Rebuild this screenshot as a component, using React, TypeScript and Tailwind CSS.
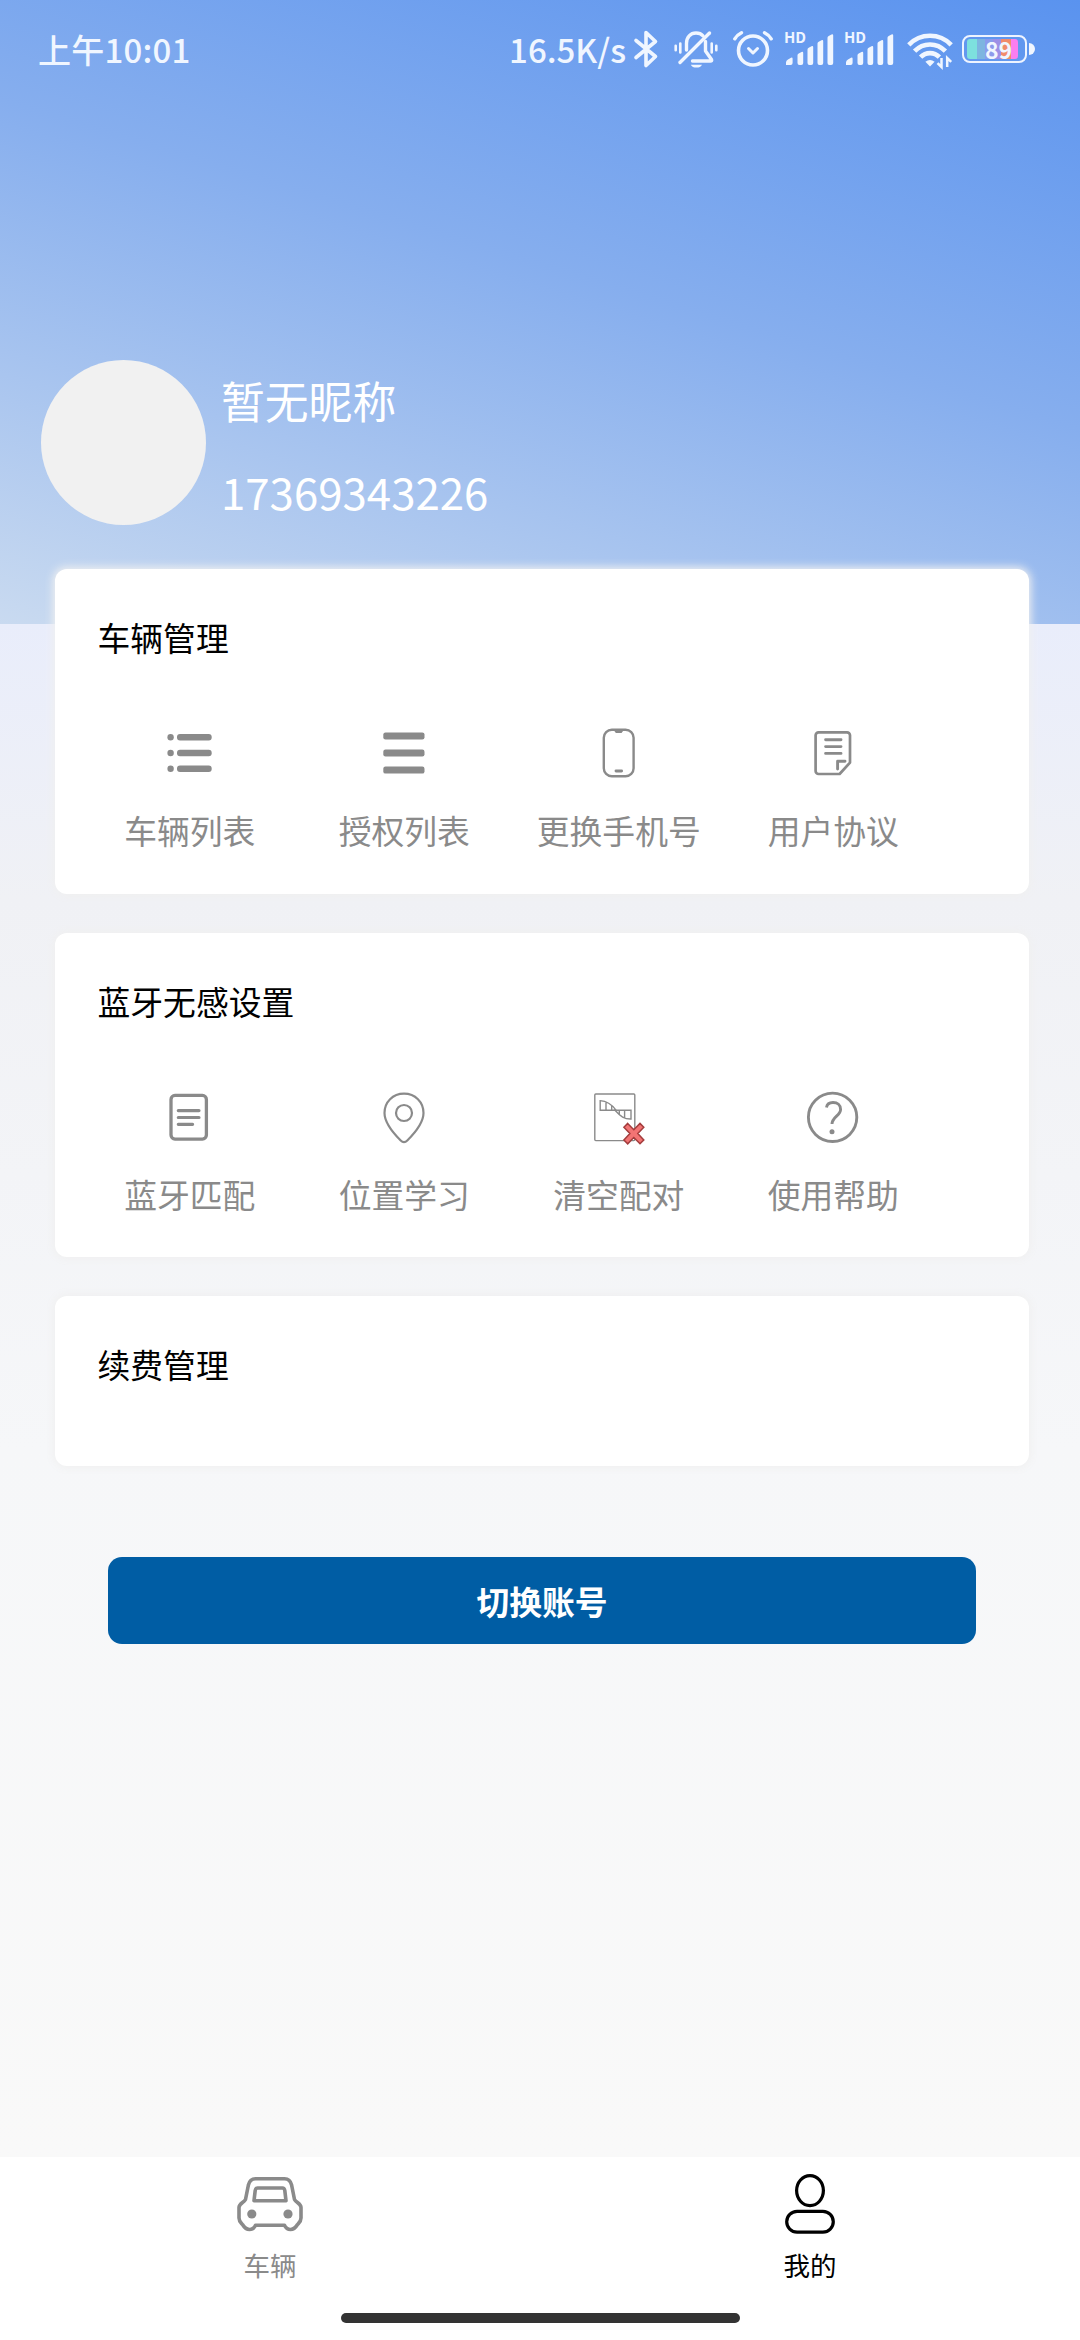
import type { ReactNode } from "react";

const GRAY = "#8a8a8a";

function ListIcon() {
  return (
    <svg className="size-[60px]" viewBox="0 0 60 60" fill={GRAY}>
      {[14.3, 30, 45.7].map((y) => (
        <g key={y}>
          <circle cx="10.6" cy={y} r="3.2" />
          <rect x="17" y={y - 3.2} width="34.7" height="6.4" rx="3" />
        </g>
      ))}
    </svg>
  );
}

function MenuIcon() {
  return (
    <svg className="size-[60px]" viewBox="0 0 60 60" fill={GRAY}>
      {[12.9, 30, 47.1].map((y) => (
        <rect key={y} x="9.3" y={y - 3.5} width="41.2" height="7" rx="2.2" />
      ))}
    </svg>
  );
}

function PhoneIcon() {
  return (
    <svg className="size-[60px]" viewBox="0 0 60 60" fill="none" stroke={GRAY} strokeLinecap="round">
      <rect x="14.8" y="6.8" width="29.8" height="46.4" rx="8" strokeWidth="2.4" />
      <path d="M26 7.6h7.4l-1.2 1.6h-5z" fill={GRAY} strokeWidth="1.4" />
      <path d="M27 48h5.6" strokeWidth="2.9" />
    </svg>
  );
}

function AgreementIcon() {
  return (
    <svg className="size-[60px]" viewBox="0 0 60 60" fill="none" stroke={GRAY} strokeLinecap="round" strokeLinejoin="round">
      <path d="M15.6 9.3H44a3 3 0 0 1 3 3V39.6L36.6 51H15.6a3 3 0 0 1-3-3V12.3a3 3 0 0 1 3-3z" strokeWidth="2.7" />
      <path d="M22.6 16.8H38M22.6 23.6H38M22.6 30.4H38" strokeWidth="2.9" />
      <path d="M34.6 46V38.3H42" strokeWidth="2.9" />
    </svg>
  );
}

function DocumentIcon() {
  return (
    <svg className="size-[60px]" viewBox="0 0 60 60" fill="none" stroke={GRAY} strokeLinecap="round">
      <rect x="11" y="8.4" width="35.4" height="43.7" rx="4" strokeWidth="3.3" />
      <path d="M18.3 23.6H39M18.3 30.5H39M18.3 37.3H32.6" strokeWidth="3.2" />
    </svg>
  );
}

function PinIcon() {
  return (
    <svg className="size-[60px]" viewBox="0 0 60 60" fill="none" stroke={GRAY} strokeWidth="2.2">
      <path d="M30 6.6C18.8 6.6 10.5 15 10.5 26c0 9.500 8 19.300 16.200 27.500 2.200 2.200 4.400 2.200 6.600 0C41.500 45.300 49.500 35.500 49.500 26 49.500 15 41.200 6.600 30 6.600z" />
      <circle cx="30" cy="26" r="8" />
    </svg>
  );
}

function ClearIcon() {
  return (
    <svg className="size-[60px]" viewBox="0 0 60 60" fill="none" stroke={GRAY} strokeWidth="1.4">
      <rect x="5.800" y="7" width="40" height="46.600" rx="1" />
      <path d="M11.200 13.600V23.300H27.200C22.500 17 18 13.800 11.200 13.600zM17 14.500V23.300M22.700 18V23.300" />
      <path d="M26 23.300H42V32C35.500 32.200 31.500 29.500 26 23.300zM30.300 23.300V27.500M35.600 23.300V31" />
      <path
        d="M38.700 36.400l6.100 6.300 6.200-6.300 3.800 3.900-6 6.300 6 6.300-3.800 3.900-6.200-6.300-6.100 6.300-3.800-3.900 6-6.300-6-6.300z"
        fill="#f27474"
        stroke="#a33c3c"
        strokeWidth="1.500"
      />
    </svg>
  );
}

function HelpIcon() {
  return (
    <svg className="size-[60px]" viewBox="0 0 60 60" fill="none" stroke={GRAY}>
      <circle cx="29.600" cy="30.300" r="24.200" strokeWidth="2.900" />
      <path d="M23.500 20.500C24 17 26.500 15.500 30 15.500c4.500 0 7.600 2.600 7.600 6.900 0 6-8.600 7.600-8.600 14.600" strokeWidth="2.900" />
      <circle cx="29" cy="44.700" r="2.500" fill={GRAY} stroke="none" />
    </svg>
  );
}

function CarIcon() {
  return (
    <svg className="h-[56px] w-[68px]" viewBox="0 0 68 56" fill="none" stroke={GRAY} strokeLinejoin="round">
      <path
        d="M19.500 2.700H48.500C53 2.700 54.800 5.500 55.600 9L58.500 23.500C60 26.500 65 27.500 65 31.500V42C65 45.500 63.500 46.500 61.500 48.500 60 51 58 53.500 54.500 53.500 51 53.500 49.500 51.500 48.500 49.300H19.500C18.500 51.500 17 53.500 13.500 53.500 10 53.500 8 51 6.500 48.500 4.500 46.500 3 45.500 3 42V31.500C3 27.500 8 26.500 9.500 23.500L12.400 9C13.200 5.500 15 2.700 19.500 2.700z"
        strokeWidth="3.600"
      />
      <path d="M21.500 12H46.500C48 12 48.500 13 48.800 14.500L50 24.700H18L19.200 14.500C19.500 13 20 12 21.500 12z" strokeWidth="3.600" />
      <circle cx="15.800" cy="38" r="4.600" fill={GRAY} stroke="none" />
      <circle cx="52" cy="38" r="4.600" fill={GRAY} stroke="none" />
    </svg>
  );
}

function UserIcon() {
  return (
    <svg className="h-[62px] w-[54px]" viewBox="0 0 54 62" fill="none" stroke="#000" strokeWidth="3.200">
      <ellipse cx="27" cy="17.600" rx="13.400" ry="15" />
      <rect x="3.700" y="38.300" width="46.600" height="20.800" rx="10.400" />
    </svg>
  );
}

function BluetoothIcon() {
  return (
    <svg className="h-[42px] w-[26px]" viewBox="0 0 26 42" fill="none" stroke="#f0f6ff" strokeWidth="3.600" strokeLinecap="round" strokeLinejoin="round">
      <path d="M3 12.500L22.500 28.500 13 37.500V4.500L22.500 13.500 3 29.500" />
    </svg>
  );
}

function MutedBellIcon() {
  return (
    <svg className="h-[42px] w-[46px]" viewBox="0 0 46 42" fill="none" stroke="#f0f6ff" strokeWidth="3.400" strokeLinecap="round" strokeLinejoin="round">
      <path d="M13.500 22V15.500C13.500 9 17.500 5 23 5c3 0 5.400 1 7 2.800" />
      <path d="M32.500 13.500V23l6 8.500c.5 1 0 1.500-1 1.500H19.500" />
      <path d="M36.500 5L7 34.500" />
      <path d="M17.800 36.700H29a6 4.500 0 0 1-11.200 0z" fill="#f0f6ff" stroke="none" />
      <path d="M7.300 15.500v9M2.700 17.700v4.600M38.700 15.500v9M43.300 17.700v4.600" strokeWidth="2.600" />
    </svg>
  );
}

function AlarmIcon() {
  return (
    <svg className="h-[42px] w-[42px]" viewBox="0 0 42 42" fill="none" stroke="#f0f6ff" strokeWidth="3.600" strokeLinecap="round" strokeLinejoin="round">
      <circle cx="21" cy="22.500" r="14.500" />
      <path d="M16.500 20.500l4.500 4.500 4.500-4.500" strokeWidth="3" />
      <path d="M2.800 10.800C4.500 8 6.800 6 9.500 4.700M39.200 10.800C37.500 8 35.200 6 32.500 4.700" strokeWidth="3.400" />
    </svg>
  );
}

function Signal() {
  return (
    <div className="relative h-[42px] w-[50px]">
      <span className="absolute -top-[1px] left-0 text-[15px] leading-[20px] font-bold">HD</span>
      <svg className="h-full w-full" viewBox="0 0 50 42" fill="#f0f6ff">
        <path d="M2 37V34.500q0-2 2-3l3-1.700q1.600-.8 1.600 1V35q0 2-2 2z" />
        <path d="M13.500 35V27.200q0-1.200 1.200-1.800l2.800-1.500q1.700-.7 1.700 1V35q0 2-2 2h-1.700q-2 0-2-2z" />
        <path d="M23.500 35V21.500q0-1.200 1.200-1.800l2.800-1.500q1.700-.7 1.700 1V35q0 2-2 2h-1.700q-2 0-2-2z" />
        <path d="M33.500 35V15.500q0-1.200 1.200-1.800l2.800-1.500q1.700-.7 1.700 1V35q0 2-2 2h-1.700q-2 0-2-2z" />
        <path d="M43.500 35V9.700q0-1.200 1.200-1.800l2.800-1.500q1.700-.7 1.700 1V35q0 2-2 2h-1.700q-2 0-2-2z" />
      </svg>
    </div>
  );
}

function WifiIcon() {
  return (
    <svg className="h-[42px] w-[46px]" viewBox="0 0 46 42" fill="none" stroke="#f0f6ff" strokeWidth="4.600">
      <path d="M1.800 16.800C13.500 4.700 32.500 4.700 44.200 16.800" />
      <path d="M7.600 23.200c8.500-9 22.300-9 30.800 0" />
      <path d="M13.600 29.200c5.200-5.500 13.600-5.500 18.800 0" />
      <path d="M23 38.500l-4.600-4.700q4.600-3.400 9.200 0z" fill="#f0f6ff" stroke="none" />
      <path d="M34.500 30v9l-4-3.800M40.200 39v-9l4 3.800" strokeWidth="2.500" />
    </svg>
  );
}

function Battery() {
  return (
    <div className="flex items-center">
      <div className="flex h-[28px] w-[65px] items-center rounded-[8px] border-2 border-[#eef4ff] p-[3px]">
        <div className="relative flex h-[20px] w-[51px] overflow-hidden rounded-[3px]">
          <i className="w-[10px] bg-[#7de0de]" />
          <i className="w-[8px] bg-[#7db5e0]" />
          <i className="w-[8px] bg-[#8a9cec]" />
          <i className="w-[8px] bg-[#9d8fe6]" />
          <i className="w-[10px] bg-[#f08c6c]" />
          <i className="w-[7px] bg-[#fb7ef0]" />
        </div>
        <span className="absolute ml-[18px] text-[23px] leading-[28px] font-bold">89</span>
      </div>
      <div className="ml-[2px] h-[12px] w-[6px] rounded-r-full bg-[#f0f6ff]" />
    </div>
  );
}

function StatusBar() {
  return (
    <div className="flex h-[98px] items-center justify-between pr-[45px] pl-[38px] text-[#f0f6ff]">
      <span className="text-[33px] leading-none font-medium tracking-[0.2px]">上午10:01</span>
      <div className="flex items-center">
        <span className="text-[33px] leading-none font-medium">16.5K/s</span>
        <div className="ml-[7px]"><BluetoothIcon /></div>
        <div className="ml-[14px]"><MutedBellIcon /></div>
        <div className="ml-[13px]"><AlarmIcon /></div>
        <div className="ml-[10px]"><Signal /></div>
        <div className="ml-[10px]"><Signal /></div>
        <div className="ml-[13px]"><WifiIcon /></div>
        <div className="ml-[9px]"><Battery /></div>
      </div>
    </div>
  );
}

function Card({ title, className, children }: { title: string; className: string; children?: ReactNode }) {
  return (
    <section className={`rounded-[12px] bg-white pl-[27.5px] shadow-[0_0_8px_2px_#f0f0f0] ${className}`}>
      <h2 className="pt-[44px] pl-[15px] text-[32.8px] leading-[48px]">{title}</h2>
      {children && <div className="mt-[62px] grid w-[858px] grid-cols-4">{children}</div>}
    </section>
  );
}

function Item({ icon, label }: { icon: ReactNode; label: string }) {
  return (
    <div className="flex flex-col items-center text-[#8a8a8a]">
      {icon}
      <span className="mt-[23px] text-[32.8px] leading-[48px]">{label}</span>
    </div>
  );
}

export default function App() {
  return (
    <div className="flex h-[2340px] w-[1080px] flex-col overflow-hidden bg-[linear-gradient(180deg,#e9edfb_624px,#f0f1f5_900px,#f6f7f9_1450px,#f9f9f9_2157px)] font-['Noto_Sans_CJK_SC',sans-serif] text-black">
      <header className="h-[624px] shrink-0 bg-[linear-gradient(197deg,#5a93ef_0%,#86aeee_45%,#c9daf0_100%)]">
        <StatusBar />
        <div className="mt-[262px] flex h-[165px] pl-[41px] text-white">
          <div className="size-[165px] rounded-full bg-[#f1f1f1]" />
          <div className="ml-[15px] text-[43.800px]">
            <p className="mt-[8px] leading-[64px]">暂无昵称</p>
            <p className="mt-[27px] leading-[64px]">17369343226</p>
          </div>
        </div>
      </header>

      <main className="-mt-[55px] flex grow flex-col pr-[51px] pl-[55px]">
        <Card title="车辆管理" className="h-[325px]">
          <Item icon={<ListIcon />} label="车辆列表" />
          <Item icon={<MenuIcon />} label="授权列表" />
          <Item icon={<PhoneIcon />} label="更换手机号" />
          <Item icon={<AgreementIcon />} label="用户协议" />
        </Card>
        <Card title="蓝牙无感设置" className="mt-[39px] h-[324px]">
          <Item icon={<DocumentIcon />} label="蓝牙匹配" />
          <Item icon={<PinIcon />} label="位置学习" />
          <Item icon={<ClearIcon />} label="清空配对" />
          <Item icon={<HelpIcon />} label="使用帮助" />
        </Card>
        <Card title="续费管理" className="mt-[39px] h-[170px]" />
        <button className="mx-[53px] mt-[91px] h-[87px] rounded-[14px] bg-[#005da4] text-[32.800px] font-bold text-white">
          切换账号
        </button>
      </main>

      <nav className="flex h-[183px] shrink-0 flex-col items-center bg-white">
        <div className="grid w-full grid-cols-2 text-[26.500px] leading-[38px]">
          <div className="flex flex-col items-center pt-[19px] text-[#8a8a8a]">
            <CarIcon />
            <span className="mt-[14px]">车辆</span>
          </div>
          <div className="flex flex-col items-center pt-[16px]">
            <UserIcon />
            <span className="mt-[11px]">我的</span>
          </div>
        </div>
        <div className="mt-[29px] h-[10px] w-[399px] rounded-full bg-[#333333]" />
      </nav>
    </div>
  );
}
